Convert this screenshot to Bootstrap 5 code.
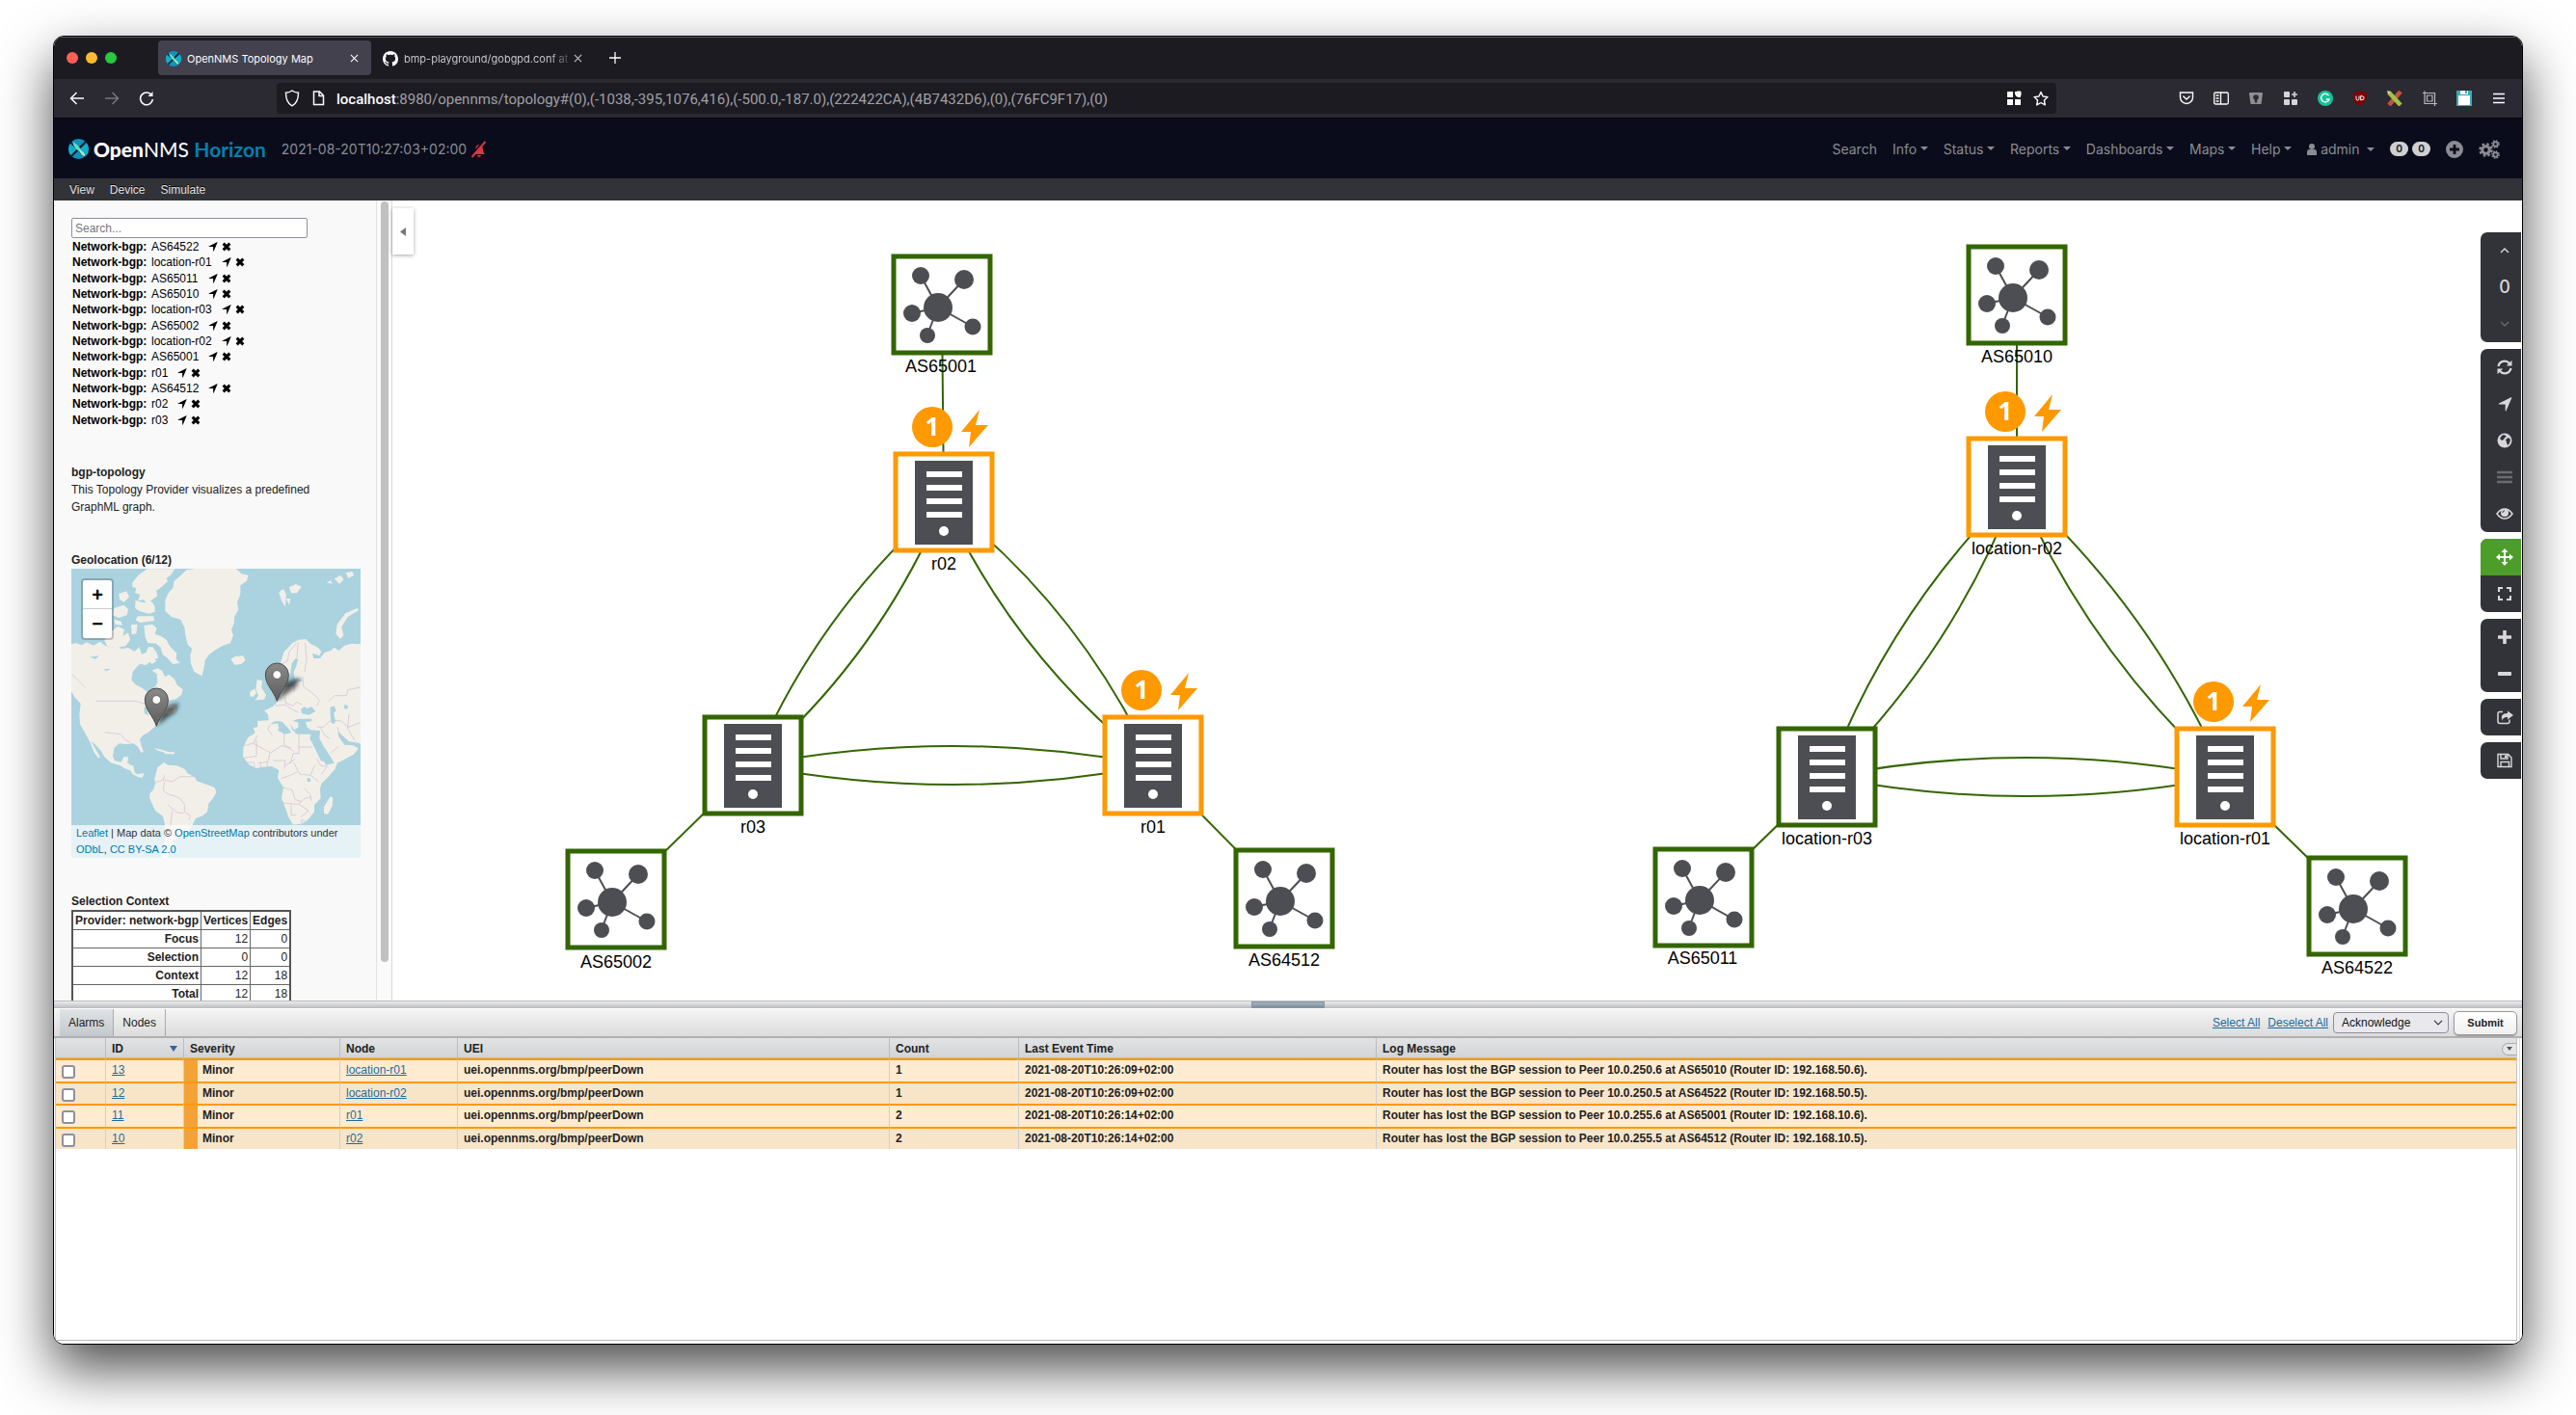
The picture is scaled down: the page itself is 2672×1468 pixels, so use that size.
<!DOCTYPE html>
<html lang="en">
<head>
<meta charset="utf-8">
<meta name="viewport" content="width=device-width, initial-scale=1">
<title>OpenNMS Topology Map</title>
<link href="https://cdn.jsdelivr.net/npm/bootstrap@5.3.0/dist/css/bootstrap.min.css" rel="stylesheet">
<style>
body{background:#fff;font-family:"Liberation Sans",Arial,sans-serif;font-size:12px;line-height:18px;color:#222;padding:37px 55px 73px;min-height:100vh}
svg{display:block;flex:none}
.window{border:1px solid #000;border-radius:11px;overflow:hidden;flex:1;background:#fff;min-height:0}
.shadow-wrap{border-radius:11px;box-shadow:0 25px 55px rgba(0,0,0,.7);height:calc(100vh - 110px);min-height:900px}
.ui{font-family:Inter,"Open Sans",sans-serif}
.tabstrip{height:44px;background:#1c1b22;box-shadow:inset 0 1px 0 #5b5b60;padding-left:13px}
.light{width:12px;height:12px;border-radius:50%}
.btab{height:36px;width:221px;border-radius:4px;font-size:11px;line-height:16px;padding:1px 9px 0 8px;color:#fbfbfe;margin-left:43px;background:#42414d}
.btab.idle{background:none;margin-left:4px;padding-right:4px;width:219px;color:#c4c4c9}
.btab .ttl{flex:1;white-space:nowrap;margin-left:6px}
.btab.idle .ttl{-webkit-mask-image:linear-gradient(90deg,#000 86%,transparent);mask-image:linear-gradient(90deg,#000 86%,transparent)}
.plain{border:0;background:none;padding:0;color:inherit}
.toolbar{height:40px;background:#2b2a33;color:#fbfbfe;padding:0 16px}
.urlbar{height:32px;background:#1c1b22;border-radius:4px;margin-left:127px;margin-right:127px;padding:0 8px;flex:1;color:#a0a0a6}
.urltext{font-family:Roboto,sans-serif;font-size:15px;line-height:20px;padding:2px 0 0 2px}
.urltext b{font-weight:500;color:#fbfbfe}
.topnav{height:63px;background:#0a0c1b;border-top:1px solid #050509;color:#8b8c93;font-size:14px;line-height:24px;padding:1px 23px 0 15px}
.topnav .nav-link{color:#8b8c93;padding:0 7px 0 8px;font-size:14px;line-height:24px}
.brandtext{font-family:Lato,sans-serif;font-size:21px;line-height:24px;color:#fff;margin-left:5px;text-decoration:none}
.brandtext strong{font-weight:900}
.brandtext em{font-style:normal;font-weight:700;color:#0081ad}
.cnt{background:#d0d0d2;color:#24252c;font-size:10px;font-weight:700;line-height:15px;border-radius:8px;width:19px;text-align:center}
.menubar{height:23px;background:#323338;padding-left:16px;gap:16px}
.menubar button{color:#e4e4e6;text-shadow:0 -1px 0 #000}
.sidebar{width:351px;flex:none;background:#f9f9f9;border-right:1px solid #d8d8d8;overflow:hidden}
.sidecol{flex:1;padding:18px 16px 0 18px;border-right:1px solid #e2e2e2}
.track{width:15px;background:#fafafa;padding:1px 0 0 4px}
.thumb{width:8px;height:789px;border-radius:4px;background:#c1c1c1}
.find{width:245px;height:21px;border:1px solid #8f8f9d;border-radius:2px;padding:0 3px;font-size:12px;background:#fff}
.find::placeholder{color:#777}
.hits{height:196px;margin:1px 0 0 1px;color:#000;line-height:16px}
.hits li{flex:1}
.hits b{width:82px}
.hits span{margin-right:10px}
.mini{font-size:12px;line-height:18px;font-weight:700;margin:0}
.about{margin:37px 0}
.map{width:300px;height:300px;position:relative;overflow:hidden;margin-bottom:36px}
.zoomer{position:absolute;left:10px;top:10px;border:2px solid rgba(0,0,0,.2);border-radius:4px;background:#fff;background-clip:padding-box}
.zoomer button{width:30px;height:30px;font-size:20px;line-height:30px;font-weight:700;color:#000}
.zoomer button:first-child{border-bottom:1px solid #ccc}
.attrib{position:absolute;left:0;right:0;bottom:0;background:rgba(255,255,255,.7);font-size:11px;line-height:17px;padding:0 5px;height:34px;color:#333;white-space:nowrap}
.attrib a{color:#0078a8;text-decoration:none}
.ctx{border:2px solid #555;background:#fff;width:228px;border-collapse:collapse;white-space:nowrap}
.ctx th,.ctx td{border:1px solid #666;text-align:right;padding:0 2px;height:19px;line-height:18px}
.stage{flex:1;min-width:0;background:#fff;position:relative}
.stage>svg{width:100%;height:100%}
.fold{position:absolute;left:0;top:8px;width:22px;height:48px;background:#fff;box-shadow:0 1px 4px rgba(0,0,0,.35)}
.tools{position:absolute;right:1px;top:33px;gap:7px;width:42px;color:#d8d8dc}
.tools .grp{background:#323338;border-radius:7px 0 0 7px;overflow:hidden}
.tools button{height:38px;width:100%;padding-left:8px}
.tools .on{background:#4c9d29;color:#fff}
.tools .off{color:#6a6b70}
.tools .num{font-size:18px;font-weight:500;line-height:38px;padding-left:8px}
.split{height:8px;background:linear-gradient(#ececee,#b9bbbe);border-top:1px solid #bbb}
.grip{width:76px;background:linear-gradient(#a3b4bf,#7c8e9b);border:1px solid #8797a3}
.bottom{height:348px;flex:none;background:#fff}
.tabsbar{height:31px;background:linear-gradient(#f4f4f4,#dcdcdc);border-top:1px solid #fff;border-bottom:2px solid #b0b0b0;padding:0 5px 0 6px;gap:0}
.tabsbar .pane{padding:0 9px;border-right:1px solid #aaa;align-self:stretch}
.tabsbar .pane.on{background:linear-gradient(#dfe3e6,#c2c8cc)}
.tabsbar a{color:#1b6c9f}
.act{width:120px;height:22px;border:1px solid #8f8f9d;border-radius:4px;background-color:#e9e9ed;padding:0 8px;font-size:12px;line-height:18px;margin:0 5px;color:#111;background-size:10px 10px;background-position:right 5px center}
.go{width:66px;height:25px;border:1px solid #999;border-radius:5px;background:linear-gradient(#fff,#f0f0f0);font-size:11px;font-weight:700;box-shadow:0 1px 1px #999;color:#222}
.frame2{border-right:1px solid #ddd;margin-right:2px}
.frame{margin:0 2px 3px 1px;border-left:1px solid #c4c4c4;border-right:1px solid #c4c4c4;border-bottom:1px solid #b8b8b8;flex:1}
.alarms{table-layout:fixed;width:100%;font-weight:700;border-collapse:separate;border-spacing:0}
.alarms th,.alarms td{padding:0 6px;border-right:1px solid #cfcfcf;white-space:nowrap;line-height:18px}
.alarms th{height:21px;padding-top:2px;background:linear-gradient(#e2e3e5,#d2d4d6);border-color:#bbb;border-bottom:1px solid #bbb}
.alarms td{height:24px;border-top:2px solid #ff9900;background:#ffebcf;vertical-align:top;padding-top:1px}
.alarms tr:nth-child(even) td{height:23px;background:#f8e5c8}
.alarms tbody tr .sev{background:linear-gradient(90deg,#f4a236 14px,#ffebcf 14px);padding-left:19px}
.alarms tbody tr:nth-child(even) .sev{background:linear-gradient(90deg,#f4a236 14px,#f8e5c8 14px)}
.alarms td:last-child,.alarms th:last-child{border-right:0}
.alarms a{color:#1b6c9f;font-weight:400}
.alarms input{width:14px;height:14px;border:2px solid #8f8f9d;border-radius:3px;margin:4px 0 0;appearance:none;background:#fff;display:block}
.colbtn{width:15px;height:13px;border:1px solid #aaa;border-right:0;border-radius:7px 0 0 7px;margin-right:-6px;background:#e6e6e8}
.sorter{border:4px solid transparent;border-top:6px solid #3f5e9b;border-bottom:0;width:0;height:0}
.lbl text{font:18px "Liberation Sans",Arial,sans-serif;text-anchor:middle;fill:#000}
.num1 text{font:700 26px "Open Sans",sans-serif;text-anchor:middle;fill:#fff}
</style>
</head>
<body class="d-flex flex-column m-0">
<svg width="0" height="0" class="position-absolute" aria-hidden="true">
 <defs>
  <symbol id="onms" viewBox="0 0 20 20"><clipPath id="oc"><circle cx="10" cy="10" r="10"/></clipPath><g clip-path="url(#oc)"><rect width="20" height="20" fill="#1191bb"/><path d="M0 5 10 10 3 17 0 14zM20 4 10 10l8 8 2-3z" fill="#14aecb"/><path d="M0 1 19 20M20 0 1 19" stroke="#0a1a2a" stroke-width="2"/><path d="M4 3c5 2 9 7 9 11-4-2-8-6-9-11z" fill="#5fe0c6"/><path d="M11 11c3 1 5 3 6 7-3-1-6-4-6-7z" fill="#a4efcb"/></g></symbol>
  <symbol id="arrow" viewBox="0 0 16 16"><path d="M15.300.8 9.200 15q-.5.8-1 .1V8H1.100q-.8-.5.1-1L14.500.2q.9-.2.8.6z" fill="currentColor"/></symbol>
  <symbol id="times" viewBox="0 0 12 12"><path d="M2 2l8 8M10 2l-8 8" stroke="currentColor" stroke-width="3.600" stroke-linecap="butt"/></symbol>
  <symbol id="x" viewBox="0 0 10 10"><path d="M1 1l8 8M9 1 1 9" stroke="currentColor" stroke-width="1.200"/></symbol>
  <symbol id="gear" viewBox="-10 -10 20 20"><circle r="5" fill="none" stroke="currentColor" stroke-width="4"/><circle r="8" fill="none" stroke="currentColor" stroke-width="3.400" stroke-dasharray="3.400 2.880"/></symbol>
  <g id="hub"><rect x="-50" y="-50" width="100" height="100" fill="#fff" stroke="#360" stroke-width="5"/><path d="M-4 3-22-30M-4 3 23-26M-4 3-31 9M-4 3-15 31M-4 3 32 23" stroke="#4d4e53" stroke-width="2"/><g fill="#4d4e53"><circle cx="-4" cy="3" r="15"/><circle cx="-22" cy="-30" r="9"/><circle cx="23" cy="-26" r="10"/><circle cx="-31" cy="9" r="9"/><circle cx="-15" cy="32" r="8"/><circle cx="32" cy="23" r="8.500"/></g></g>
  <g id="srv"><rect x="-50" y="-50" width="100" height="100" fill="#fff" stroke="currentColor" stroke-width="5"/><rect x="-30" y="-43" width="60" height="87" fill="#4d4e53"/><path d="M-18-29h37M-18-15h37M-18-1h37M-18 13h37" stroke="#fff" stroke-width="6"/><circle cy="30" r="5" fill="#fff"/></g>
  <g id="alert" fill="#f90"><circle cx="-12" cy="-78" r="21"/><path d="M37-96 18-73h10l-2 16L46-80H33z"/></g>
  <linearGradient id="pg" x1="0" x2="0" y1="0" y2="1"><stop offset="0" stop-color="#8a8a8a"/><stop offset="1" stop-color="#5d5d5d"/></linearGradient>
  <filter id="bl" x="-50%" y="-50%" width="200%" height="200%"><feGaussianBlur stdDeviation="7"/></filter>
  <g id="pin"><path d="M0 0 25-60 70-72 60-45z" fill="#000" opacity=".6" filter="url(#bl)"/><path d="M0 0C-10-32-36-50-36-82a36 36 0 0 1 72 0C36-50 10-32 0 0z" fill="url(#pg)" stroke="#4c4c4c" stroke-width="3"/><circle cy="-82" r="13" fill="#fff" stroke="#555" stroke-width="2"/></g>
 </defs>
</svg>

<div class="shadow-wrap d-flex">
<div class="window d-flex flex-column">

 <div class="tabstrip ui d-flex align-items-center">
  <div class="d-flex gap-2"><span class="light" style="background:#ff5f57"></span><span class="light" style="background:#febc2e"></span><span class="light" style="background:#28c840"></span></div>
  <div class="btab d-flex align-items-center"><svg width="16" height="16"><use href="#onms"/></svg><span class="ttl">OpenNMS Topology Map</span><button class="plain p-1" aria-label="Close tab"><svg width="9" height="9"><use href="#x"/></svg></button></div>
  <div class="btab idle d-flex align-items-center"><svg width="16" height="16" viewBox="0 0 16 16" fill="#fbfbfe"><path d="M8 0C3.580 0 0 3.580 0 8c0 3.540 2.290 6.530 5.470 7.590.4.070.55-.17.55-.38 0-.19-.01-.82-.01-1.490-2.010.37-2.530-.49-2.690-.94-.09-.23-.48-.94-.82-1.130-.28-.15-.68-.52-.01-.53.63-.01 1.080.58 1.230.82.72 1.210 1.870.87 2.330.66.070-.52.28-.87.51-1.070-1.780-.2-3.640-.89-3.640-3.950 0-.87.31-1.590.82-2.150-.08-.2-.36-1.020.080-2.120 0 0 .67-.21 2.200.82.64-.18 1.320-.27 2-.27s1.360.09 2 .27c1.530-1.040 2.200-.82 2.200-.82.44 1.100.16 1.920.080 2.120.51.56.82 1.270.82 2.150 0 3.070-1.870 3.750-3.650 3.950.29.25.54.73.54 1.480 0 1.070-.01 1.930-.01 2.200 0 .21.15.46.55.38A8.010 8.010 0 0 0 16 8c0-4.420-3.580-8-8-8z"/></svg><span class="ttl">bmp-playground/gobgpd.conf at</span><button class="plain" aria-label="Close tab"><svg width="9" height="9"><use href="#x"/></svg></button></div>
  <button class="plain text-white ms-4" aria-label="New tab"><svg width="12" height="12" viewBox="0 0 12 12" stroke="currentColor" stroke-width="1.300"><path d="M6 0v12M0 6h12"/></svg></button>
 </div>

 <div class="toolbar ui d-flex align-items-center">
  <div class="d-flex align-items-center" style="gap:20px">
   <button class="plain" aria-label="Back"><svg width="16" height="16" viewBox="0 0 16 16" fill="none" stroke="currentColor" stroke-width="1.500"><path d="M15 8H1.500M7.500 2l-6 6 6 6"/></svg></button>
   <button class="plain" style="color:#77767e" aria-label="Forward"><svg width="16" height="16" viewBox="0 0 16 16" fill="none" stroke="currentColor" stroke-width="1.500"><path d="M1 8h13.500M8.500 2l6 6-6 6"/></svg></button>
   <button class="plain" aria-label="Reload"><svg width="16" height="16" viewBox="0 0 16 16" fill="none" stroke="currentColor" stroke-width="1.600"><path d="M13.500 5A6.400 6.400 0 1 0 14.400 9"/><path d="M14.500 1v5h-5z" fill="currentColor" stroke="none"/></svg></button>
  </div>
  <div class="urlbar d-flex align-items-center">
   <svg width="16" height="18" viewBox="0 0 16 18" fill="none" stroke="#fbfbfe" stroke-width="1.400"><path d="M8 1c2 1.600 4 2 6.500 2.200C14.500 9.500 13.500 14 8 16.800 2.500 14 1.500 9.500 1.500 3.200 4 3 6 2.600 8 1z"/></svg>
   <svg class="ms-2 me-2" width="20" height="16" viewBox="0 0 20 16" fill="none" stroke="#fbfbfe" stroke-width="1.500"><path d="M6.500 1h6l4 4v9.500h-10zM12 1v4.500h4.500"/></svg>
   <span class="urltext"><b>localhost</b>:8980/opennms/topology#(0),(-1038,-395,1076,416),(-500.0,-187.0),(222422CA),(4B7432D6),(0),(76FC9F17),(0)</span>
   <svg class="ms-auto" width="16" height="16" viewBox="0 0 16 16" fill="#fbfbfe"><path d="M1 1h6v6H1zM1 9h6v6H1zM9 9h6v6H9zM9 1h3l3 3v3h-3L9 4z"/><path d="M10 6l5-5M11 1h4v4" stroke="#fbfbfe"/></svg>
   <svg class="ms-2 ps-1" width="20" height="17" viewBox="0 0 16 16" fill="none" stroke="#fbfbfe" stroke-width="1.400" stroke-linejoin="round"><path d="M8 1l2.100 4.500 4.900.600-3.600 3.400.9 4.900L8 12l-4.300 2.400.9-4.900L1 6.100l4.900-.6z"/></svg>
  </div>
  <div class="d-flex align-items-center" style="gap:20px">
   <svg width="16" height="16" viewBox="0 0 16 16" fill="none" stroke="#fbfbfe" stroke-width="1.400"><path d="M1.500 2h13v5a6.500 6.500 0 0 1-13 0zM4.800 6 8 9l3.200-3" stroke-linecap="round"/></svg>
   <svg width="16" height="16" viewBox="0 0 16 16" fill="none" stroke="#fbfbfe" stroke-width="1.300"><rect x=".7" y="2" width="14.600" height="12" rx="1.500"/><path d="M7.500 2v12M2.500 5h3M2.500 8h3M2.500 11h3"/></svg>
   <svg width="16" height="16" viewBox="0 0 16 16"><path d="M1 3q0-1 1-1h12q1 0 1 1l-1.500 11H2.500z" fill="#8f8f93"/><circle cx="8" cy="7" r="2.800" fill="#2b2a33"/><path d="M6.800 8h2.400v4.500H6.800z" fill="#2b2a33"/></svg>
   <svg width="16" height="16" viewBox="0 0 16 16" fill="#d5d5d8"><rect x="1" y="1" width="6" height="6" rx="1"/><rect x="1" y="9" width="6" height="6" rx="1"/><rect x="9" y="9" width="6" height="6" rx="1"/><path d="M11.200 1h1.600v2.200H15v1.600h-2.200V7h-1.600V4.800H9V3.200h2.200z"/></svg>
   <svg width="16" height="16" viewBox="0 0 16 16" fill="none"><circle cx="8" cy="8" r="8" fill="#15c39a"/><path d="M11.500 5.200A4.300 4.300 0 1 0 12 9H8.800" stroke="#fff" stroke-width="1.400"/></svg>
   <svg width="16" height="16" viewBox="0 0 16 16" fill="none"><path d="M8 0c2 1.500 4 2 7 2 0 7-1 11-7 14C2 13 1 9 1 2c3 0 5-.5 7-2z" fill="#800000"/><path d="M4 5.500v3q0 1.500 1.500 1.500T7 8.500v-3M8.700 5.500v4.400q3.500 0 3.500-2.200T8.700 5.500z" stroke="#fff"/></svg>
   <svg width="16" height="16" viewBox="0 0 16 16"><path d="M14 1 2 15" stroke="#c4513f" stroke-width="4.500"/><path d="M2 2l12 13" stroke="#a3c145" stroke-width="4.500"/><path d="M0 0l4 1-3 3z" fill="#e8c99a"/></svg>
   <svg width="16" height="16" viewBox="0 0 16 16" fill="none" stroke="#b9b9bd" stroke-width="1.200"><path d="M1 2.500h12.500V16M3 .5v13h13M5.500 5h5.500v6H5.500z"/></svg>
   <svg width="16" height="16" viewBox="0 0 16 16"><path d="M0 0h16v16H0z" fill="#36adb5"/><path d="M4 0h8v4H4zM2 6h12v9H2z" fill="#fff"/><path d="M4 0h5v4H4zM2 5h12v3H2z" fill="#fff" opacity=".9"/><path d="M10 0v3" stroke="#36adb5" stroke-width="2"/></svg>
   <svg width="16" height="16" viewBox="0 0 16 16" stroke="#fbfbfe" stroke-width="1.300"><path d="M2 3.500h12M2 8h12M2 12.500h12"/></svg>
  </div>
 </div>

 <nav class="topnav ui navbar navbar-expand flex-nowrap">
  <svg width="21" height="21"><use href="#onms"/></svg>
  <a href="#" class="brandtext"><strong>Open</strong>NMS <em>Horizon</em></a>
  <span class="ms-3">2021-08-20T10:27:03+02:00</span>
  <svg class="ms-1" width="18" height="18" viewBox="0 0 18 18" fill="#dc3545"><path d="M3 14c2-2 2-4 2.500-7 .4-2 2-3 3.500-3s3.200 1 3.500 3c.5 3 .6 5 2.500 7zM7 15h4q-.5 2-2 2t-2-2z"/><path d="M0 16.500 14 0" stroke="#0a0c1b" stroke-width="2"/><path d="M1.500 17 15.500.8" stroke="#dc3545" stroke-width="2"/></svg>
  <ul class="navbar-nav ms-auto align-items-center">
   <li><a class="nav-link" href="#">Search</a></li>
   <li><a class="nav-link dropdown-toggle" href="#">Info</a></li>
   <li><a class="nav-link dropdown-toggle" href="#">Status</a></li>
   <li><a class="nav-link dropdown-toggle" href="#">Reports</a></li>
   <li><a class="nav-link dropdown-toggle" href="#">Dashboards</a></li>
   <li><a class="nav-link dropdown-toggle" href="#">Maps</a></li>
   <li><a class="nav-link dropdown-toggle" href="#">Help</a></li>
   <li><a class="nav-link dropdown-toggle d-flex align-items-center" href="#"><svg class="me-1" width="10" height="12" viewBox="0 0 10 12" fill="currentColor"><circle cx="5" cy="3" r="3"/><path d="M0 12V9q0-3 2.500-3h5Q10 6 10 9v3z"/></svg>admin&nbsp;</a></li>
   <li class="d-flex ms-2 gap-1"><span class="cnt">0</span><span class="cnt">0</span></li>
   <li class="ms-3"><a href="#" class="nav-link p-0" aria-label="Add"><svg width="18" height="18" viewBox="0 0 18 18"><circle cx="9" cy="9" r="9" fill="currentColor"/><path d="M9 4v10M4 9h10" stroke="#0a0c1b" stroke-width="2.800"/></svg></a></li>
   <li class="ms-3"><a href="#" class="nav-link p-0" aria-label="Configure"><svg width="22" height="20"><use href="#gear" x="0" y="3" width="15" height="15"/><use href="#gear" x="13" y="0" width="9" height="9"/><use href="#gear" x="13" y="11" width="9" height="9"/></svg></a></li>
  </ul>
 </nav>

 <div class="menubar d-flex align-items-center"><button class="plain">View</button><button class="plain">Device</button><button class="plain">Simulate</button></div>

 <main class="d-flex" style="flex:1;min-height:0">
  <aside class="sidebar d-flex">
   <div class="sidecol">
    <input class="find d-block" type="text" placeholder="Search..." aria-label="Search">
    <ul class="hits list-unstyled d-flex flex-column">
     <li class="d-flex align-items-center"><b>Network-bgp:</b><span>AS64522</span><svg width="10" height="10"><use href="#arrow"/></svg><svg class="ms-1" width="10" height="10"><use href="#times"/></svg></li>
     <li class="d-flex align-items-center"><b>Network-bgp:</b><span>location-r01</span><svg width="10" height="10"><use href="#arrow"/></svg><svg class="ms-1" width="10" height="10"><use href="#times"/></svg></li>
     <li class="d-flex align-items-center"><b>Network-bgp:</b><span>AS65011</span><svg width="10" height="10"><use href="#arrow"/></svg><svg class="ms-1" width="10" height="10"><use href="#times"/></svg></li>
     <li class="d-flex align-items-center"><b>Network-bgp:</b><span>AS65010</span><svg width="10" height="10"><use href="#arrow"/></svg><svg class="ms-1" width="10" height="10"><use href="#times"/></svg></li>
     <li class="d-flex align-items-center"><b>Network-bgp:</b><span>location-r03</span><svg width="10" height="10"><use href="#arrow"/></svg><svg class="ms-1" width="10" height="10"><use href="#times"/></svg></li>
     <li class="d-flex align-items-center"><b>Network-bgp:</b><span>AS65002</span><svg width="10" height="10"><use href="#arrow"/></svg><svg class="ms-1" width="10" height="10"><use href="#times"/></svg></li>
     <li class="d-flex align-items-center"><b>Network-bgp:</b><span>location-r02</span><svg width="10" height="10"><use href="#arrow"/></svg><svg class="ms-1" width="10" height="10"><use href="#times"/></svg></li>
     <li class="d-flex align-items-center"><b>Network-bgp:</b><span>AS65001</span><svg width="10" height="10"><use href="#arrow"/></svg><svg class="ms-1" width="10" height="10"><use href="#times"/></svg></li>
     <li class="d-flex align-items-center"><b>Network-bgp:</b><span>r01</span><svg width="10" height="10"><use href="#arrow"/></svg><svg class="ms-1" width="10" height="10"><use href="#times"/></svg></li>
     <li class="d-flex align-items-center"><b>Network-bgp:</b><span>AS64512</span><svg width="10" height="10"><use href="#arrow"/></svg><svg class="ms-1" width="10" height="10"><use href="#times"/></svg></li>
     <li class="d-flex align-items-center"><b>Network-bgp:</b><span>r02</span><svg width="10" height="10"><use href="#arrow"/></svg><svg class="ms-1" width="10" height="10"><use href="#times"/></svg></li>
     <li class="d-flex align-items-center"><b>Network-bgp:</b><span>r03</span><svg width="10" height="10"><use href="#arrow"/></svg><svg class="ms-1" width="10" height="10"><use href="#times"/></svg></li>
    </ul>
    <div class="about"><h2 class="mini">bgp-topology</h2>This Topology Provider visualizes a predefined<br>GraphML graph.</div>
    <h2 class="mini">Geolocation (6/12)</h2>
    <div class="map">
     <svg width="300" height="300" viewBox="72 87 900 900">
      <rect x="72" y="87" width="900" height="900" fill="#aad3df"/>
      <g fill="#f2efe9">
       <path d="M72 322l15-3 18 6 14-9 22 10 20-12 18 14 22 4 12-7 14 12 22-4 20 12 14-14 8 22 14-6 6-16 14 0 12 16 6 18-22 6-16 16-20-4-12 12-10 14-4 24 12 14 22 12 18 14 10 8 6-22-8-22 6-18-4-14 20-8 14 8 8 18 14-6 16 14 8 18 18 14-4 16-18 14-22 4-16 12 4 10 22-6 12 4-2 14-22 10-10-4-14 16-4 16-18 14-16 14-16 8-10 14 4 16 8 22-8 2-10-18-14-10-22 2-22-2-16 14-4 26 6 14 20 4 8-16 14 0-2 20 18 8 4 20 8 6 22-4-6 14-14-2-16-8-8-12-16-6-16-10-28-8-20-18-10-18-18-20-14-12 16 28 12 22-4 4-14-18-14-34-16-30-14-24-2-30 4-34-20-22-14-26-24-22-18-10z"/>
       <path d="M340 706l20-16 14 8 26 2 24 10 10 14 22 12 6 12 30 10 26 10 5 14-10 20-14 16-4 26-14 12-22 8-12 24-14 16-20 4 0 14-26 12 6 14-16 16-6 22 12 22-36 2 6-34 10-44 0-50-6-24-24-18-18-40 2-14 12-14 4-16-2-16z"/>
       <path d="M364 185l10-22 14-16 4-22 24-20 14-14 30-4h124l18 16 20 4-4 18-20 14 0 28-10 24 4 24-12 20-2 22-8 20 6 18-10 24-24 8-24 14-18 14-12 18-4 26-6 22-14-8-10-6-10-24-2-26 6-20-14-14-6-24-4-30-12-24-28-8-20-18z"/>
       <path d="M262 130l20-24 26-18h86l-14 20-12 8 4 10-22 20-14 10 4 16-20 14-10 10-14-12-16 2 6-18-16-6 4-14-12-4zM272 185l24 8 26-4 10 16 0 16-18 6-30-8-14-10zM278 235l50 0 2 14-44 6-14-8zM220 165l24-8 8 18-16 16-14-8zM205 210l30-10 14 12-4 20-26 8-18-8zM205 245l22 6 4 12-22-2zM175 310l14-22 28-22 20 10-4 20 16-10 6 22-14 20-34 6-24-6zM258 262l20-2-4 28-14 4zM298 264l26-4 14 12-6 18 20 8 16 10 10 20 22 22-2 18 12 12-22 4-18-20-14-10-6-22-14-12-26-2-8-18zM310 370l20-8 6 14-14 8zM568 368l14-8 24-2 8 14-14 12-20 2z"/>
       <path d="M718 160l14-10 8 16-2 40-12-20zM750 145l20-10 18 8-14 20-18 0zM740 180l14 0-4 20zM895 290l4-30 26-34 36-16 6 6-34 20-20 32 6 26-10 12zM866 130l14-6 4 10zM890 118l20-10 10 12-14 14zM926 100l20-4 6 12-18 8z"/>
       <path d="M628 470l14-10 6 14-10 12-10-2zM650 432l16 4-2 22 14 22-6 14-28 2 10-14-8-20z"/>
       <path d="M720 390l14-44 26-28 20-10 22-2 14 14 24 12 10 14-6 12-22-8 4 16 20 0 14-18 20-6 10-10 14 10 18-16 24-6 20 2 16-6-2-26 12-20V645l-26-16-30-4-20-18-16-14 6 20 16 22 28 2 16 10-16 18-36 20-22 10-14-24-20-30-14-26 2-24-28-2-12-8-6-20-22 4 0 16-12 8-14-20 8 20 10 8-8 8-16-22-18-20-18-2-14 6-10 20-22 12-14-4 2-34 34-2-2-18-12-12 28-14 12-14 12-8-2-22zM330 646l24 4 22 8-4 4-34-10zM360 658l34 0-2 6-28 0zM878 796l8 4-2 26-14 26-12-4 0-20zM706 545l6 2-2 12-6-2z"/>
       <path d="M638 582l26-4 50-10 4 14-4 8 22 12 20-4 22 4 38 0 8 22 18 36 14 22 8 16 36-8-8 22-20 22-22 22-4 16 2 30-20 20 0 22-14 18-20 18-32 4-14-24-10-28-12-30 6-34-18-30 4-24-22-12-26 2-24 4-22-12-18-24 2-32 14-28 22-14z"/>
      </g>
      <g fill="#aad3df"><path d="M770 366l8 2-6 22-8 18 4 22 20 0 4 6-22 6-14 12-20 2-14-14 2-18 20 8 10-20 4-30zM786 526l10-10 10 6 14-6 12 16-22 10-20-4zM878 518l12-4 6 14-8 8 6 24-4 10-10-4-2-24zM922 510l12 4-4 10-10-2zM816 606l10 14 22 36 10 32-10-4-18-38-16-30zM298 520l14-10 10 14-14 4 4 16-12-6zM130 362l30-4-14 10zM172 400l22-2-12 8zM268 424l10-20 16-10 20 4 24 16 2 28-10 16-14-6-36-12zM806 738l10 2 0 10-10 0zM760 560l20-6 40 0 0 8-40 4zM860 650l8 4z"/></g>
      <g fill="none" stroke="#cdbccd" stroke-width="2">
       <path d="M148 499h122l30 8 20 20 30 0 20-18 20 4M72 415l20 18 24 24M176 596l30 4 20 2 14 18 16 8M280 672l6-12 14 4M362 730l-4 14-26 10M358 744l28 6 24-16 20 0 24 0M362 750l-4 28 14 10 36 12 16 20 0 24 18 12-4 14M372 822l30 24 20 2M386 840l-6 50-10 70"/>
       <path d="M722 385l22-10 6-30 22-26M778 316l-4 48M800 318l4 50-6 40M770 430l22-6 2 30 28 20 22 22-8 18M700 480l10 34 28-4 22 16 18 8M738 486l0 18 24 10 10-12 18 8M764 440l2 30M872 500l20-18 36 0 4-18 40-8M890 560l20 0 24 20 38-14M900 580l14 44M936 540l-4 44 22 38M838 580l20 0 18-20M820 608l22-12M848 582l10 20 18 14M880 660l24-20"/>
       <path d="M650 606l-10 24-32 8M648 620l0 50-40 6M640 632l52 28 34-22 30 6M690 572l-6 16 14 18M734 602l0 34 30 20M780 602v60h-18l-8 30M780 642h42M690 660l-6 28-30 4M700 684l38 0-4 26M738 700l30-20M764 690l18 36 34 4 14-32M724 740l30-10 20-10M730 768l30 8 8 30 22 6M816 730l26 20M728 816l50 4 20-18 20-4M756 820v34l16 0M780 820l30 20-24 20M796 770l20 20 2 20M836 680l12 20 20 2-18 26M610 690l30 0 4 26M660 690l2 26M680 690l4 24"/><circle cx="792" cy="874" r="5"/>
      </g>
      <use href="#pin" x="337" y="577"/><use href="#pin" x="712" y="499"/>
     </svg>
     <div class="zoomer d-flex flex-column"><button class="plain" aria-label="Zoom in">+</button><button class="plain" aria-label="Zoom out">−</button></div>
     <div class="attrib"><a href="#">Leaflet</a> | Map data © <a href="#">OpenStreetMap</a> contributors under<br><a href="#">ODbL</a>, <a href="#">CC BY-SA 2.0</a></div>
    </div>
    <h2 class="mini">Selection Context</h2>
    <table class="ctx"><thead><tr><th>Provider: network-bgp</th><th>Vertices</th><th>Edges</th></tr></thead>
     <tbody><tr><th>Focus</th><td>12</td><td>0</td></tr><tr><th>Selection</th><td>0</td><td>0</td></tr><tr><th>Context</th><td>12</td><td>18</td></tr><tr><th>Total</th><td>12</td><td>18</td></tr></tbody></table>
   </div>
   <div class="track"><div class="thumb"></div></div>
  </aside>

  <section class="stage">
   <svg viewBox="407 208 2209 830" role="img" aria-label="Topology">
    <g fill="none" stroke="#360" stroke-width="2">
     <path d="M977 316 979 521M781 794 639 933M1196 794 1332 932M2092 306V505M1895 806 1767 931M2308 806 2445 940"/>
     <path d="M781 794Q848 634 979 521M781 794Q912 681 979 521M1196 794Q1055 685 979 521M1196 794Q1120 630 979 521M781 794Q988 754 1196 794M781 794Q988 834 1196 794"/>
     <path d="M1895 806Q1960 634 2092 505M1895 806Q2027 677 2092 505M2308 806Q2167 678 2092 505M2308 806Q2233 633 2092 505M1895 806Q2101 766 2308 806M1895 806Q2101 846 2308 806"/>
    </g>
    <use href="#hub" x="977" y="316"/><use href="#hub" x="639" y="933"/><use href="#hub" x="1332" y="932"/>
    <use href="#hub" x="2092" y="306"/><use href="#hub" x="1767" y="931"/><use href="#hub" x="2445" y="940"/>
    <g color="#360"><use href="#srv" x="781" y="794"/><use href="#srv" x="1895" y="806"/></g>
    <g color="#f90"><use href="#srv" x="979" y="521"/><use href="#srv" x="1196" y="794"/><use href="#srv" x="2092" y="505"/><use href="#srv" x="2308" y="806"/></g>
    <use href="#alert" x="979" y="521"/><use href="#alert" x="1196" y="794"/><use href="#alert" x="2092" y="505"/><use href="#alert" x="2308" y="806"/>
    <g class="num1"><text x="967" y="452">1</text><text x="1184" y="725">1</text><text x="2080" y="436">1</text><text x="2296" y="737">1</text></g>
    <g class="lbl"><text x="976" y="386">AS65001</text><text x="979" y="591">r02</text><text x="781" y="864">r03</text><text x="1196" y="864">r01</text><text x="639" y="1004">AS65002</text><text x="1332" y="1002">AS64512</text><text x="2092" y="376">AS65010</text><text x="2092" y="575">location-r02</text><text x="1895" y="876">location-r03</text><text x="2308" y="876">location-r01</text><text x="1766" y="1000">AS65011</text><text x="2445" y="1010">AS64522</text></g>
   </svg>
   <button class="fold plain d-flex align-items-center justify-content-center" aria-label="Collapse"><svg width="6" height="9" viewBox="0 0 6 9"><path d="M6 0v9L0 4.500z" fill="#777"/></svg></button>
   <div class="tools d-flex flex-column">
    <div class="grp"><button class="plain d-flex align-items-center justify-content-center" aria-label="Up"><svg width="10" height="6" viewBox="0 0 10 6" fill="none" stroke="currentColor" stroke-width="1.400"><path d="M1 5l4-4 4 4"/></svg></button><div class="num ui text-center">0</div><button class="plain off d-flex align-items-center justify-content-center" aria-label="Down"><svg width="10" height="6" viewBox="0 0 10 6" fill="none" stroke="currentColor" stroke-width="1.400"><path d="M1 1l4 4 4-4"/></svg></button></div>
    <div class="grp"><button class="plain d-flex align-items-center justify-content-center" aria-label="Refresh"><svg width="16" height="16" viewBox="0 0 16 16" fill="none" stroke="currentColor" stroke-width="2.200"><path d="M1.500 7A6.600 6.600 0 0 1 13 4M14.500 9A6.600 6.600 0 0 1 3 12"/><path d="M15.500.8V6.500H9.800zM.5 15.200V9.500h5.700z" fill="currentColor" stroke="none"/></svg></button>
     <button class="plain d-flex align-items-center justify-content-center" aria-label="Center"><svg width="15" height="15"><use href="#arrow"/></svg></button>
     <button class="plain d-flex align-items-center justify-content-center" aria-label="Geolocation"><svg width="16" height="16" viewBox="0 0 16 16"><circle cx="8" cy="8" r="7.500" fill="currentColor"/><path d="M5 3l2-1 2 1 1 1-2 1-1 2-2 1-2-2zM9 7l3-2 2 2-1 4-2 2-1-3z" fill="#323338"/></svg></button>
     <button class="plain off d-flex align-items-center justify-content-center" aria-label="List"><svg width="16" height="14" viewBox="0 0 16 14" stroke="currentColor" stroke-width="2.400"><path d="M0 2h16M0 7h16M0 12h16"/></svg></button>
     <button class="plain d-flex align-items-center justify-content-center" aria-label="Show"><svg width="18" height="12" viewBox="0 0 18 12"><path d="M1 6Q4.500 1 9 1t8 5q-3.500 5-8 5T1 6z" fill="none" stroke="currentColor" stroke-width="1.500"/><circle cx="9" cy="5" r="4" fill="currentColor"/><path d="M6.800 5q0-2.200 2.200-2.200" fill="none" stroke="#323338"/></svg></button></div>
    <div class="grp"><button class="plain on d-flex align-items-center justify-content-center" aria-label="Pan"><svg width="18" height="18" viewBox="0 0 18 18"><path d="M9 2v14M2 9h14" stroke="currentColor" stroke-width="2"/><path d="M9 0l3.500 4h-7zM9 18l3.500-4h-7zM0 9l4-3.500v7zM18 9l-4-3.500v7z" fill="currentColor"/></svg></button>
     <button class="plain d-flex align-items-center justify-content-center" aria-label="Select area"><svg width="14" height="14" viewBox="0 0 14 14" fill="none" stroke="currentColor" stroke-width="2.200"><path d="M1 5V1h4M9 1h4v4M13 9v4H9M5 13H1V9"/></svg></button></div>
    <div class="grp"><button class="plain d-flex align-items-center justify-content-center" aria-label="Zoom in"><svg width="14" height="14" viewBox="0 0 14 14" stroke="currentColor" stroke-width="3.600"><path d="M7 0v14M0 7h14"/></svg></button>
     <button class="plain d-flex align-items-center justify-content-center" aria-label="Zoom out"><svg width="14" height="4" viewBox="0 0 14 4"><rect width="14" height="4" rx="1" fill="currentColor"/></svg></button></div>
    <div class="grp"><button class="plain d-flex align-items-center justify-content-center" aria-label="Share"><svg width="17" height="15" viewBox="0 0 17 14"><path d="M6 1H3Q1 1 1 3v8q0 2 2 2h8q2 0 2-2V9" fill="none" stroke="currentColor" stroke-width="1.500"/><path d="M11 0l6 4.500L11 9V6.500Q6.500 6 5.500 10 2.500 3 11 2.600z" fill="currentColor"/></svg></button></div>
    <div class="grp"><button class="plain d-flex align-items-center justify-content-center" aria-label="Save"><svg width="16" height="16" viewBox="0 0 16 15" fill="none" stroke="currentColor" stroke-width="1.400"><path d="M1 1h10.500L15 4.500V14H1zM4 1v4.500h7V1M4 14V9h8.500v5"/><path d="M8 2h2v2.500H8z" fill="currentColor" stroke="none"/></svg></button></div>
   </div>
  </section>
 </main>

 <div class="split d-flex justify-content-center flex-shrink-0"><div class="grip"></div></div>

 <section class="bottom d-flex flex-column">
  <div class="tabsbar d-flex align-items-center">
   <button class="plain pane on">Alarms</button><button class="plain pane">Nodes</button>
   <a href="#" class="ms-auto me-1">Select All</a><a href="#" class="ms-1">Deselect All</a>
   <select class="act form-select" aria-label="Action"><option>Acknowledge</option><option>Unacknowledge</option><option>Escalate</option><option>Clear</option></select>
   <button class="go p-0">Submit</button>
  </div>
  <div class="frame2 flex-grow-1 d-flex"><div class="frame">
   <table class="alarms">
    <colgroup><col style="width:52px"><col style="width:81px"><col style="width:162px"><col style="width:122px"><col style="width:448px"><col style="width:134px"><col style="width:371px"><col></colgroup>
    <thead><tr><th></th><th><div class="d-flex align-items-center justify-content-between">ID<span class="sorter"></span></div></th><th>Severity</th><th>Node</th><th>UEI</th><th>Count</th><th>Last Event Time</th><th><div class="d-flex align-items-center justify-content-between">Log Message<button class="colbtn p-0 d-flex align-items-center justify-content-center" aria-label="Columns"><svg width="6" height="4" viewBox="0 0 6 4"><path d="M0 0h6L3 4z" fill="#555"/></svg></button></div></th></tr></thead>
    <tbody>
     <tr><td><input type="checkbox" aria-label="Select alarm 13"></td><td><a href="#">13</a></td><td class="sev">Minor</td><td><a href="#">location-r01</a></td><td>uei.opennms.org/bmp/peerDown</td><td>1</td><td>2021-08-20T10:26:09+02:00</td><td>Router has lost the BGP session to Peer 10.0.250.6 at AS65010 (Router ID: 192.168.50.6).</td></tr>
     <tr><td><input type="checkbox" aria-label="Select alarm 12"></td><td><a href="#">12</a></td><td class="sev">Minor</td><td><a href="#">location-r02</a></td><td>uei.opennms.org/bmp/peerDown</td><td>1</td><td>2021-08-20T10:26:09+02:00</td><td>Router has lost the BGP session to Peer 10.0.250.5 at AS64522 (Router ID: 192.168.50.5).</td></tr>
     <tr><td><input type="checkbox" aria-label="Select alarm 11"></td><td><a href="#">11</a></td><td class="sev">Minor</td><td><a href="#">r01</a></td><td>uei.opennms.org/bmp/peerDown</td><td>2</td><td>2021-08-20T10:26:14+02:00</td><td>Router has lost the BGP session to Peer 10.0.255.6 at AS65001 (Router ID: 192.168.10.6).</td></tr>
     <tr><td><input type="checkbox" aria-label="Select alarm 10"></td><td><a href="#">10</a></td><td class="sev">Minor</td><td><a href="#">r02</a></td><td>uei.opennms.org/bmp/peerDown</td><td>2</td><td>2021-08-20T10:26:14+02:00</td><td>Router has lost the BGP session to Peer 10.0.255.5 at AS64512 (Router ID: 192.168.10.5).</td></tr>
    </tbody>
   </table>
  </div></div>
 </section>
</div>
</div>
<script src="https://cdn.jsdelivr.net/npm/bootstrap@5.3.0/dist/js/bootstrap.bundle.min.js"></script>
</body>
</html>
